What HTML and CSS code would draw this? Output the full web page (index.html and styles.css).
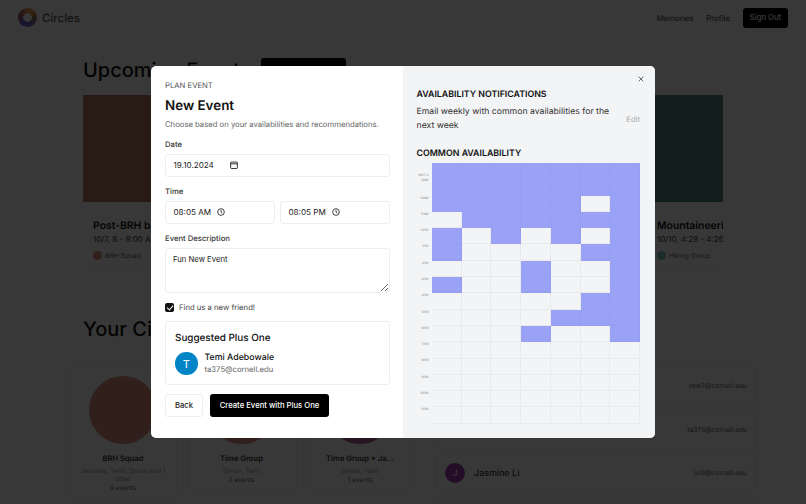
FILE: index.html
```html
<!DOCTYPE html>
<html lang="en">
  <head>
    <meta charset="UTF-8" />
    <meta name="viewport" content="width=device-width, initial-scale=1.0" />
    <title>Circles</title>
    <link rel="stylesheet" href="styles.css">
  </head>
  <body>
    <nav class="nav">
      <div class="brand">
        <span class="brand-ring"></span>
        <span>Circles</span>
      </div>
      <div class="nav-links">
        <a>Memories</a>
        <a>Profile</a>
        <button class="btn-dark nav-signout">Sign Out</button>
      </div>
    </nav>

    <main class="page">
      <div class="heading-row">
        <h1>Upcoming Events</h1>
        <button class="btn-dark heading-btn">Plan Event</button>
      </div>

      <div class="events">
        <div class="event">
          <div class="event-img brown"></div>
          <div class="event-body">
            <h3>Post-BRH brunch</h3>
            <p class="event-date">10/7, 8 - 9:00 AM</p>
            <p class="event-group"><span class="dot salmon"></span>BRH Squad</p>
          </div>
        </div>
        <div class="event"></div>
        <div class="event"></div>
        <div class="event">
          <div class="event-img pine"></div>
          <div class="event-body">
            <h3>Mountaineering Documentary</h3>
            <p class="event-date">10/10, 4:29 - 4:26</p>
            <p class="event-group"><span class="dot teal"></span>Hiking Group</p>
          </div>
        </div>
      </div>

      <div class="lower">
        <section class="circles-col">
          <h1>Your Circles</h1>
          <div class="circles">
            <div class="circle-card first">
              <div class="circle salmon"></div>
              <h4>BRH Squad</h4>
              <p>Jasmine, Temi, Simon and 1 other</p>
              <p class="count">9 events</p>
            </div>
            <div class="circle-card">
              <div class="circle salmon"></div>
              <h4>Time Group</h4>
              <p>Simon, Temi</p>
              <p class="count">2 events</p>
            </div>
            <div class="circle-card last">
              <div class="circle plum"></div>
              <h4>Time Group + Ja...</h4>
              <p>Simon, Temi</p>
              <p class="count">1 events</p>
            </div>
          </div>
        </section>
        <section class="friends">
          <div class="friend"><span class="friend-email">vkw7@cornell.edu</span></div>
          <div class="friend"><span class="friend-email">ta375@cornell.edu</span></div>
          <div class="friend">
            <span class="friend-avatar">J</span>
            <span class="friend-name">Jasmine Li</span>
            <span class="friend-email">jxl9@cornell.edu</span>
          </div>
          <div class="friend"></div>
        </section>
      </div>
    </main>

    <div class="overlay">
      <div class="modal">
        <form class="plan">
          <p class="eyebrow">PLAN EVENT</p>
          <h2>New Event</h2>
          <p class="sub">Choose based on your availabilities and recommendations.</p>

          <label class="field-label">Date</label>
          <div class="input">
            <span>19.10.2024</span>
            <svg class="date-icon" viewBox="0 0 12 12" width="8" height="8" fill="none" stroke="#111" stroke-width="1.3">
              <rect x="1" y="1.6" width="10" height="9.6" rx="1" />
              <path d="M1 4.2h10" />
            </svg>
          </div>

          <label class="field-label">Time</label>
          <div class="time-row">
            <div class="input">
              <span>08:05 AM</span>
              <svg class="clock" viewBox="0 0 12 12" width="8" height="8" fill="none" stroke="#111" stroke-width="1.2">
                <circle cx="6" cy="6" r="5" />
                <path d="M6 3v3.2l2 1.2" />
              </svg>
            </div>
            <div class="input">
              <span>08:05 PM</span>
              <svg class="clock" viewBox="0 0 12 12" width="8" height="8" fill="none" stroke="#111" stroke-width="1.2">
                <circle cx="6" cy="6" r="5" />
                <path d="M6 3v3.2l2 1.2" />
              </svg>
            </div>
          </div>

          <label class="field-label">Event Description</label>
          <textarea class="desc">Fun New Event</textarea>

          <label class="check">
            <input type="checkbox" checked />
            <span>Find us a new friend!</span>
          </label>

          <div class="suggest">
            <h3>Suggested Plus One</h3>
            <div class="person">
              <span class="person-avatar">T</span>
              <div>
                <p class="person-name">Temi Adebowale</p>
                <p class="person-email">ta375@cornell.edu</p>
              </div>
            </div>
          </div>

          <div class="actions">
            <button type="button" class="btn-back">Back</button>
            <button type="button" class="btn-dark btn-create">Create Event with Plus One</button>
          </div>
        </form>

        <aside class="side">
          <svg class="close" viewBox="0 0 10 10" width="6" height="6" fill="none" stroke="#222" stroke-width="1.1">
            <path d="M1 1l8 8M9 1l-8 8" />
          </svg>
          <h4>AVAILABILITY NOTIFICATIONS</h4>
          <div class="notify">
            <p>Email weekly with common availabilities for the next week</p>
            <span class="edit">Edit</span>
          </div>
          <h4>COMMON AVAILABILITY</h4>
          <div class="sched">
            <div class="times">
              <span class="nine">GMT-4<br />9AM</span>
              <span>10AM</span><span>11AM</span><span>12PM</span><span>1PM</span>
              <span>2PM</span><span>3PM</span><span>4PM</span><span>5PM</span><span>6PM</span>
              <span>7PM</span><span>8PM</span><span>9PM</span><span>10PM</span><span>11PM</span>
            </div>
            <div class="grid" id="grid"></div>
          </div>
        </aside>
      </div>
    </div>

    <script>
      // one string per hour, 8AM to 11PM, x = someone is free
      const rows = [
        "xxxxxxx", "xxxxxxx", "xxxxx.x", ".xxxxxx",
        "x.x.x.x", "x....xx", "...x..x", "x..x..x",
        ".....xx", "....xxx", "...x..x", ".......",
        ".......", ".......", ".......", ".......",
      ];
      const grid = document.getElementById("grid");
      rows.forEach(function (row) {
        row.split("").forEach(function (c) {
          const cell = document.createElement("div");
          cell.className = c === "x" ? "cell on" : "cell";
          grid.appendChild(cell);
        });
      });
    </script>
  </body>
</html>
```

FILE: styles.css
```css
* {
  box-sizing: border-box;
}

html,
body {
  height: 100%;
}

body {
  margin: 0;
  overflow: hidden;
  background-color: #fff;
  color: #111;
  font-family: Inter, "Liberation Sans", sans-serif;
  text-rendering: geometricPrecision;
}

h1,
h2,
h3,
h4,
p {
  margin: 0;
}

.salmon {
  background-color: #d98f79;
}

.teal {
  background-color: #7ccabd;
}

.plum {
  background-color: #b85f9c;
}

.brown {
  background-color: #b57a66;
}

.pine {
  background-color: #4f8a80;
}

.btn-dark {
  background-color: #000;
  color: #fff;
  border: 0;
  border-radius: 3px;
  font-family: inherit;
  font-weight: 500;
}

/* page under the dialog */
.nav {
  display: flex;
  justify-content: space-between;
  align-items: center;
  height: 35px;
  padding: 0 18px;
}

.brand {
  display: flex;
  align-items: center;
  gap: 5px;
  font-size: 11.5px;
  font-weight: 500;
  color: #555;
}

.brand-ring {
  width: 19px;
  height: 19px;
  border-radius: 50%;
  background: radial-gradient(circle, #fff 0 4px, transparent 4.5px),
    conic-gradient(#e89a45 0 15%, #8f7a5a 25%, #5b5fd6 50% 60%, #a9536f 80%, #e89a45);
}

.nav-links {
  display: flex;
  align-items: center;
  gap: 13px;
  font-size: 7.8px;
  color: #333;
}

.nav-signout {
  width: 45px;
  height: 20px;
  font-size: 7.7px;
  padding: 0;
}

.page {
  height: 469px;
  padding: 23px 83px 0;
  overflow: hidden;
}

.heading-row {
  display: flex;
  align-items: center;
  gap: 10px;
}

h1 {
  font-size: 20px;
  font-weight: 500;
  line-height: 24px;
}

.heading-btn {
  width: 85px;
  height: 24px;
  font-size: 7.7px;
}

.events {
  display: flex;
  gap: 16px;
  width: 640px;
  height: 175px;
  margin-top: 13px;
  overflow: hidden;
}

.event {
  flex: 0 0 172px;
  border-bottom: 1px solid #eee;
}

.event-img {
  height: 107px;
}

.event-body {
  padding: 18px 10px;
}

.event-body h3 {
  font-size: 10.4px;
  line-height: 12px;
  font-weight: 600;
}

.event-date {
  margin-top: 1px;
  font-size: 8px;
  line-height: 12px;
  color: #333;
}

.event-group {
  display: flex;
  align-items: center;
  gap: 3px;
  margin-top: 6px;
  font-size: 6.7px;
  color: #666;
}

.dot {
  width: 9px;
  height: 9px;
  border-radius: 50%;
}

.lower {
  display: flex;
  margin-top: 47px;
}

.circles-col {
  flex: none;
  width: 353px;
}

.circles {
  display: flex;
  gap: 9.5px;
  margin-top: 24px;
  margin-left: -14px;
}

.circle-card {
  flex: 0 0 110px;
  height: 125px;
  padding: 10px 6px 0;
  border: 1px solid #f0f0f0;
  border-radius: 3px;
  text-align: center;
  font-size: 6.5px;
  line-height: 8px;
  color: #999;
}

.circle-card.first {
  flex-basis: 108px;
  height: 132px;
}

.circle-card.last {
  flex-basis: 108px;
}

.circle {
  width: 68px;
  height: 68px;
  margin: 0 auto 9px;
  border-radius: 50%;
}

.circle-card h4 {
  margin-bottom: 3px;
  font-size: 7.6px;
  line-height: 11px;
  font-weight: 600;
  color: #333;
  white-space: nowrap;
}

.circle-card .count {
  margin-top: 1px;
  color: #666;
}

.friends {
  display: flex;
  flex: none;
  flex-direction: column;
  gap: 5.5px;
  width: 321px;
  padding-top: 50px;
}

.friend {
  display: flex;
  flex: none;
  align-items: center;
  height: 38px;
  padding: 0 9px 0 8px;
  border: 1px solid #f0f0f0;
  border-radius: 3px;
  font-size: 6.7px;
}

.friend-avatar {
  display: flex;
  justify-content: center;
  align-items: center;
  width: 20px;
  height: 20px;
  margin-right: 9px;
  border-radius: 50%;
  background-color: #a63bb3;
  color: #fff;
  font-size: 9px;
}

.friend-name {
  font-size: 9px;
  color: #111;
}

.friend-email {
  margin-left: auto;
  color: #666;
}

/* dialog */
.overlay {
  position: fixed;
  inset: 0;
  display: flex;
  justify-content: center;
  align-items: center;
  background-color: rgba(0, 0, 0, 0.78);
}

.modal {
  display: flex;
  width: 504px;
  height: 372px;
  border-radius: 5px;
  overflow: hidden;
  background-color: #fff;
}

.plan {
  flex: 0 0 252px;
  padding: 14px 13px 0 14px;
}

.eyebrow {
  font-size: 7.7px;
  line-height: 11px;
  color: #555;
}

.plan h2 {
  margin-top: 6px;
  font-size: 13.4px;
  line-height: 18px;
  font-weight: 600;
}

.sub {
  margin-top: 4.5px;
  font-size: 7.7px;
  line-height: 10px;
  color: #666;
}

.field-label {
  display: block;
  margin: 9.5px 0 3.5px;
  font-size: 7.7px;
  line-height: 11px;
  font-weight: 500;
  color: #333;
}

.input {
  display: flex;
  align-items: center;
  flex: 1;
  height: 23px;
  padding: 0 7.5px;
  border: 1px solid #eceef1;
  border-radius: 3px;
  font-size: 8.1px;
  color: #222;
}

.date-icon {
  margin-left: 16px;
}

.clock {
  margin-left: 6px;
}

.time-row {
  display: flex;
  gap: 5px;
}

.desc {
  display: block;
  width: 100%;
  height: 45px;
  padding: 6px 7px;
  border: 1px solid #eceef1;
  border-radius: 3px;
  font-family: inherit;
  font-size: 7.7px;
  color: #222;
}

.check {
  display: flex;
  align-items: center;
  gap: 5px;
  margin-top: 10px;
  font-size: 7.7px;
  line-height: 9px;
  color: #444;
}

.check input {
  position: relative;
  width: 9px;
  height: 9px;
  margin: 0;
  appearance: none;
  border-radius: 2px;
  background-color: #111;
}

.check input::after {
  content: "";
  position: absolute;
  left: 3px;
  top: 1px;
  width: 3px;
  height: 5px;
  border: solid #fff;
  border-width: 0 1px 1px 0;
  transform: rotate(40deg);
}

.suggest {
  height: 64px;
  margin-top: 9.5px;
  padding: 10px 9px 0;
  border: 1px solid #eceef1;
  border-radius: 3px;
}

.suggest h3 {
  font-size: 9.9px;
  line-height: 13px;
  font-weight: 500;
}

.person {
  display: flex;
  align-items: center;
  gap: 7px;
  margin-top: 7px;
}

.person-avatar {
  display: flex;
  justify-content: center;
  align-items: center;
  width: 22.5px;
  height: 22.5px;
  border-radius: 50%;
  background-color: #0284c7;
  color: #fff;
  font-size: 11px;
}

.person-name {
  font-size: 8.8px;
  line-height: 12px;
  font-weight: 500;
}

.person-email {
  font-size: 7.7px;
  line-height: 11px;
  color: #666;
}

.actions {
  display: flex;
  gap: 7px;
  margin-top: 9px;
}

.actions button {
  height: 23px;
  font-size: 7.7px;
  padding: 0;
}

.btn-back {
  width: 38px;
  background-color: #fff;
  border: 1px solid #eceef1;
  border-radius: 3px;
  font-family: inherit;
  font-weight: 500;
  color: #222;
}

.btn-create {
  width: 119px;
}

.side {
  position: relative;
  flex: 1;
  padding: 23px 15px 0 13.5px;
  background-color: #f3f4f6;
}

.close {
  position: absolute;
  top: 10px;
  right: 11px;
}

.side h4 {
  font-size: 8.8px;
  line-height: 12px;
  font-weight: 600;
}

.notify {
  display: flex;
  align-items: center;
  gap: 11px;
  margin: 5px 0 15px;
  font-size: 8.7px;
  line-height: 13.5px;
  color: #333;
}

.notify p {
  flex: 1;
}

.edit {
  flex: none;
  font-size: 7.7px;
  color: #aaa;
}

.sched {
  display: flex;
  margin-top: 3px;
}

.times {
  display: flex;
  flex-direction: column;
  flex: none;
  width: 12px;
  margin-right: 3.5px;
  padding-top: 9.5px;
  font-size: 3.2px;
  line-height: 5.5px;
  color: #888;
  text-align: right;
}

.times span {
  height: 16.3px;
}

.times .nine {
  height: 23px;
}

.grid {
  display: grid;
  grid-template-columns: repeat(7, 1fr);
  grid-template-rows: repeat(16, 16.3px);
  width: 208px;
}

.cell {
  border-right: 1px solid #e8eaed;
  border-bottom: 1px solid #e8eaed;
}

.cell.on {
  background-color: #99a2f4;
  border-color: #959ef2;
}
```
